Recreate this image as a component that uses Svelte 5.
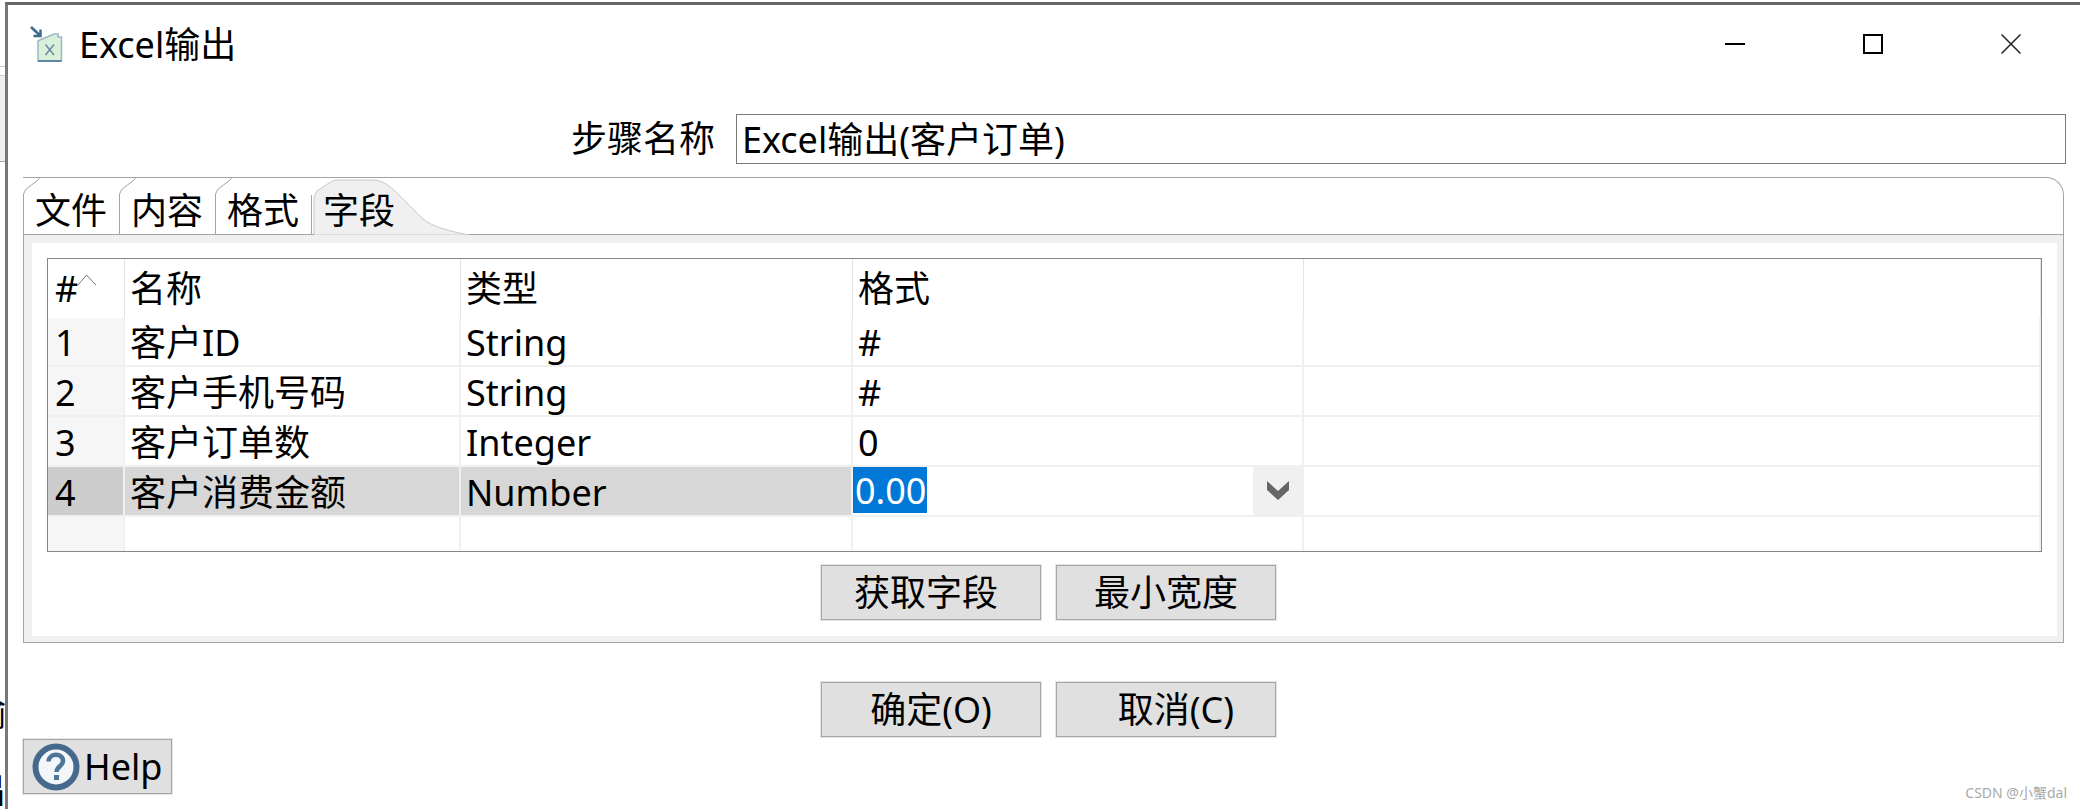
<script>
  const columns = ['名称', '类型', '格式', ''];
  const rows = [
    { id: 1, name: '客户ID', type: 'String', format: '#' },
    { id: 2, name: '客户手机号码', type: 'String', format: '#' },
    { id: 3, name: '客户订单数', type: 'Integer', format: '0' },
    { id: 4, name: '客户消费金额', type: 'Number', format: '0.00', active: true }
  ];
  const tabs = ['文件', '内容', '格式'];
</script>

<div class="page">
  <div class="behind">
    <div class="stripe"></div>
    <span class="ghost first">输</span>
    <span class="ghost second">出</span>
  </div>

  <div class="window">
    <header class="titlebar">
      <svg class="app-icon" width="34" height="36" viewBox="0 0 34 36">
        <path d="M11 13.5 L24 8 L28 8 L28 11 L31.5 11 L31.5 35 L8 35 L8 15 Z" fill="#d9f0da" stroke="#9db8c4" stroke-width="1.5" />
        <path d="M8 35 H31.5" stroke="#5f87a3" stroke-width="2" />
        <path d="M15.5 18.5 L24 29 M24 18.5 L15.5 29" stroke="#6f8ea5" stroke-width="1.6" fill="none" />
        <path d="M1 1 L9.5 9" stroke="#3f6a8f" stroke-width="2.5" fill="none" />
        <path d="M10.5 3.5 V10 H3.5" stroke="#3f6a8f" stroke-width="2.5" fill="none" />
      </svg>
      <span class="title">Excel输出</span>
      <div class="controls">
        <div class="control">
          <svg width="20" height="20" viewBox="0 0 20 20"><path d="M0 10 H20" stroke="#000" stroke-width="2" /></svg>
        </div>
        <div class="control">
          <svg width="20" height="20" viewBox="0 0 20 20"><rect x="1" y="1" width="18" height="18" fill="none" stroke="#000" stroke-width="2" /></svg>
        </div>
        <div class="control">
          <svg width="20" height="20" viewBox="0 0 20 20"><path d="M0.5 0.5 L19.5 19.5 M19.5 0.5 L0.5 19.5" stroke="#222" stroke-width="1.5" /></svg>
        </div>
      </div>
    </header>

    <div class="step-row">
      <span class="step-label">步骤名称</span>
      <div class="step-input">Excel输出(客户订单)</div>
    </div>

    <div class="folder">
      <div class="tabstrip">
        {#each tabs as tab}
          <div class="tab">
            <svg class="tab-shape" width="96" height="57" viewBox="0 0 96 57">
              <path d="M0.5 57 V17 L3 12 L14 4 L17 0.5 H96" fill="#fff" stroke="#a4a4a4" />
            </svg>
            <span class="tab-text">{tab}</span>
          </div>
        {/each}
        <div class="tab current">
          <svg class="tab-shape" width="160" height="58" viewBox="0 0 160 58">
            <path d="M3 58 V20 L6 14 L18 6 L24 3 H60 C72 3 78 8 90 20 L112 42 C122 50 138 54 158 58 Z" fill="#f0f0f0" stroke="#c8c8c8" />
            <path d="M0.5 57 V18" stroke="#a4a4a4" />
          </svg>
          <span class="tab-text">字段</span>
        </div>
      </div>

      <div class="panel">
        <div class="panel-inner">
          <div class="grid">
            <div class="cell head rowhead">
              #
              <svg class="sort" width="20" height="12" viewBox="0 0 20 12"><path d="M1 11 L9.5 1 L19 11" fill="none" stroke="#777" stroke-width="1" /></svg>
            </div>
            {#each columns as col}
              <div class="cell head">{col}</div>
            {/each}

            {#each rows as row}
              <div class="cell rowhead" class:active={row.active}>{row.id}</div>
              <div class="cell" class:active={row.active}>{row.name}</div>
              <div class="cell" class:active={row.active}>{row.type}</div>
              {#if row.active}
                <div class="cell editing">
                  <span class="selection">{row.format}</span>
                  <span class="drop">
                    <svg width="22" height="20" viewBox="0 0 22 20"><path d="M0 0 L11 10 L22 0 V9 L11 19 L0 9 Z" fill="#666" /></svg>
                  </span>
                </div>
              {:else}
                <div class="cell">{row.format}</div>
              {/if}
              <div class="cell"></div>
            {/each}

            <div class="cell rowhead last"></div>
            <div class="cell last"></div>
            <div class="cell last"></div>
            <div class="cell last"></div>
            <div class="cell last"></div>
          </div>

          <div class="buttons">
            <button class="btn nudge-left">获取字段</button>
            <button class="btn">最小宽度</button>
          </div>
        </div>
      </div>
    </div>

    <div class="buttons confirm">
      <button class="btn">确定(O)</button>
      <button class="btn nudge-right">取消(C)</button>
    </div>

    <button class="btn help">
      <svg width="48" height="48" viewBox="0 0 48 48">
        <circle cx="24" cy="24" r="20.5" fill="#f4f7fa" stroke="#44698c" stroke-width="6" />
        <path d="M16.5 18.5 C17 9.5 31 9.5 31 18 C31 23 24.5 23.5 24.5 29" fill="none" stroke="#4f7597" stroke-width="4.5" />
        <rect x="22" y="32" width="5" height="5" fill="#4f7597" />
      </svg>
      <span>Help</span>
    </button>

    <span class="watermark">CSDN @小蟹dal</span>
  </div>
</div>

<style>
  :global(body) {
    margin: 0;
    background: #fff;
  }

  .page {
    display: flex;
    height: 809px;
    overflow: hidden;
    color: #000;
    font-family: "Noto Sans", "Noto Sans CJK SC", sans-serif;
    font-size: 36px;
    background: #fff;
  }

  .behind {
    position: relative;
    width: 5px;
    flex: none;
    overflow: hidden;
  }

  .stripe {
    margin-top: 66px;
    height: 96px;
    box-sizing: border-box;
    border-top: 1px solid #ccc;
    border-bottom: 1px solid #aaa;
    background: linear-gradient(#fff 8px, #ccc 8px, #ccc 9px, #f0f0f0 9px);
  }

  .ghost {
    position: absolute;
    right: -1px;
    line-height: 36px;
  }

  .ghost.first {
    top: 695px;
  }

  .ghost.second {
    top: 772px;
  }

  .window {
    position: relative;
    flex: 1;
    min-width: 0;
    margin-top: 2px;
    border-top: 3px solid #666;
    border-left: 3px solid #777;
    background: #fff;
  }

  .titlebar {
    display: flex;
    align-items: center;
    height: 78px;
    padding-left: 22px;
  }

  .app-icon {
    flex: none;
  }

  .title {
    margin-left: 15px;
    padding-top: 2px;
    font-size: 36px;
    line-height: 1;
  }

  .controls {
    display: flex;
    margin-left: auto;
  }

  .control {
    display: flex;
    align-items: center;
    justify-content: center;
    width: 138px;
    height: 78px;
  }

  .step-row {
    display: flex;
    align-items: center;
    margin: 31px 14px 0 0;
  }

  .step-label {
    width: 728px;
    padding-right: 21px;
    box-sizing: border-box;
    text-align: right;
    line-height: 50px;
  }

  .step-input {
    flex: 1;
    height: 50px;
    box-sizing: border-box;
    padding-left: 5px;
    border: 1px solid #7a7a7a;
    line-height: 49px;
    white-space: nowrap;
  }

  .folder {
    margin: 13px 16px 0 15px;
  }

  .tabstrip {
    display: flex;
    height: 57px;
    box-sizing: border-box;
    border-top: 1px solid #a4a4a4;
    border-right: 1px solid #a4a4a4;
    border-top-right-radius: 18px;
  }

  .tab {
    position: relative;
    width: 96px;
    height: 57px;
    margin-top: -1px;
    flex: none;
  }

  .tab.current {
    width: 160px;
  }

  .tab-shape {
    position: absolute;
    left: 0;
    top: 0;
  }

  .tab-text {
    position: absolute;
    left: 12px;
    top: 10px;
    line-height: 48px;
    white-space: nowrap;
  }

  .panel {
    box-sizing: border-box;
    height: 409px;
    padding: 8px 6px 6px 8px;
    border: 1px solid #a4a4a4;
    background: #f0f0f0;
  }

  .panel-inner {
    height: 100%;
    box-sizing: border-box;
    padding: 15px 15px 0;
    background: #fff;
  }

  .grid {
    display: grid;
    grid-template-columns: 77px 336px 392px 451px 1fr;
    grid-template-rows: 59px 49px 50px 50px 50px 34px;
    height: 294px;
    box-sizing: border-box;
    border: 1px solid #808890;
  }

  .cell {
    position: relative;
    display: flex;
    align-items: center;
    box-sizing: border-box;
    min-width: 0;
    padding: 3px 0 0 5px;
    border-right: 2px solid #f0f0f0;
    border-bottom: 2px solid #f0f0f0;
    line-height: 1;
    white-space: nowrap;
  }

  .cell.head {
    padding-top: 0;
    border-bottom: none;
    border-right-width: 1px;
    border-right-color: #e4e4e4;
  }

  .cell.rowhead {
    background: #f6f6f6;
    padding-left: 7px;
  }

  .cell.rowhead.head {
    background: #fff;
  }

  .cell.active {
    background: #d7d7d7;
  }

  .cell.rowhead.active {
    background: #cdcdcd;
  }

  .cell.last {
    border-bottom: none;
  }

  .sort {
    position: absolute;
    left: 29px;
    top: 15px;
  }

  .cell.editing {
    align-items: flex-start;
    justify-content: space-between;
    padding: 0;
  }

  .selection {
    height: 46px;
    padding: 0 1px 0 2px;
    color: #fff;
    background: #0078d7;
    line-height: 47px;
  }

  .drop {
    display: flex;
    align-items: center;
    justify-content: center;
    width: 49px;
    height: 48px;
    background: #f0f0f0;
  }

  .buttons {
    display: flex;
    justify-content: center;
    gap: 15px;
    margin-top: 13px;
    padding-left: 8px;
  }

  .buttons.confirm {
    margin-top: 39px;
    padding-left: 9px;
  }

  .btn {
    width: 220px;
    height: 55px;
    padding: 0;
    box-sizing: border-box;
    border: 1px solid #a6a6a6;
    outline: 1px solid #e6e6e6;
    outline-offset: 0;
    background: #e0e0e0;
    color: #000;
    font: inherit;
    line-height: 1;
  }

  .nudge-left {
    padding-right: 10px;
  }

  .nudge-right {
    padding-left: 20px;
  }

  .help {
    display: flex;
    align-items: center;
    gap: 4px;
    width: 149px;
    margin: 2px 0 0 15px;
    padding-left: 8px;
  }

  .watermark {
    position: absolute;
    right: 13px;
    bottom: 9px;
    color: #aaa;
    font-size: 14px;
    line-height: 1;
  }
</style>
